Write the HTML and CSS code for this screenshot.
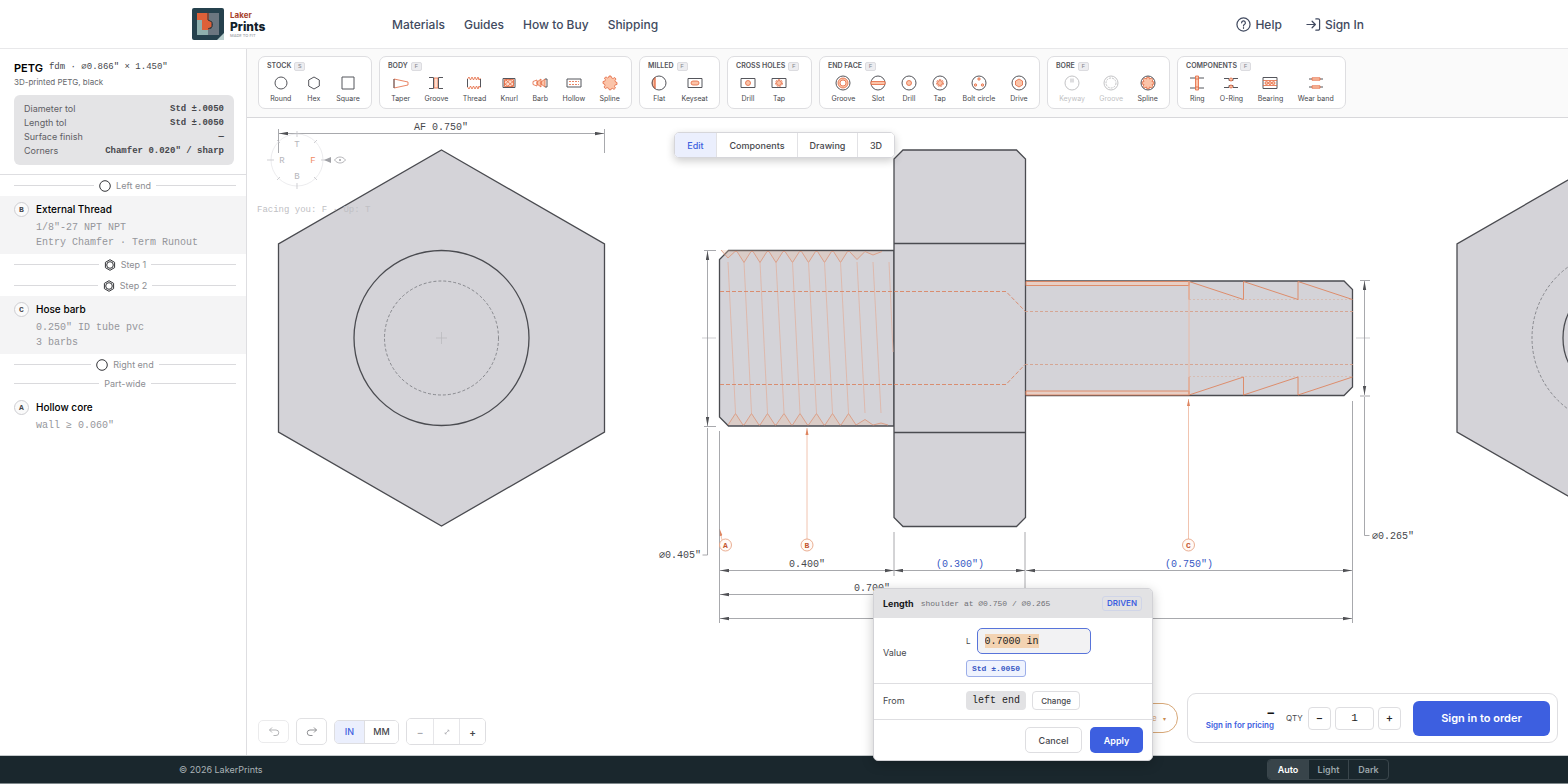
FILE: index.html
```html
<!DOCTYPE html>
<html lang="en">
<head>
<meta charset="utf-8">
<title>LakerPrints</title>
<link rel="stylesheet" href="styles.css">
</head>
<body>
<header class="site-header">
  <a class="brand" href="#">
    <svg class="brand-mark" viewBox="0 0 32 32" aria-hidden="true">
      <rect width="32" height="32" rx="2" fill="#25414d"/>
      <path d="M5 12h5v9h6v6H5z" fill="#8fb0ae"/>
      <path d="M17 5h10v22H16v-6h3l2-5-4-3z" fill="#6b7680"/>
      <path d="M5 5h12v7l3 2v5l-4 3h-6V12H5z" fill="#dd6038"/>
      <path d="M16 5v7l4 2v5l-4 2" fill="none" stroke="#2a343c"/>
      <path d="M32 25v7h-7z" fill="#b9cfce"/>
    </svg>
    <span class="brand-text">
      <span class="brand-top">Laker</span>
      <span class="brand-main">Prints</span>
      <span class="brand-tag">MADE TO FIT</span>
    </span>
  </a>
  <nav class="site-nav">
    <a href="#">Materials</a><a href="#">Guides</a><a href="#">How to Buy</a><a href="#">Shipping</a>
  </nav>
  <div class="account">
    <a href="#"><svg class="ic15" viewBox="0 0 16 16"><circle cx="8" cy="8" r="7"/><path d="M6 6.2a2 2 0 1 1 2.9 1.8C8.200 8.400 8 8.800 8 9.500M8 11.300v.8"/></svg>Help</a>
    <a href="#"><svg class="ic15" viewBox="0 0 16 16"><path d="M1 8h9M6.500 4.500 10 8l-3.500 3.500M10.500 2H13a1.500 1.500 0 0 1 1.500 1.500v9A1.500 1.500 0 0 1 13 14h-2.500"/></svg>Sign In</a>
  </div>
</header>

<main class="workspace">
  <aside class="sidebar">
    <section class="summary">
      <h1><b>PETG</b> <span>fdm · ⌀0.866" × 1.450"</span></h1>
      <p>3D-printed PETG, black</p>
      <dl class="specs">
        <div><dt>Diameter tol</dt><dd>Std ±.0050</dd></div>
        <div><dt>Length tol</dt><dd>Std ±.0050</dd></div>
        <div><dt>Surface finish</dt><dd>—</dd></div>
        <div><dt>Corners</dt><dd>Chamfer 0.020" / sharp</dd></div>
      </dl>
    </section>
    <div class="rule"><svg viewBox="0 0 12 12"><circle cx="6" cy="6" r="5.300"/></svg>Left end</div>
    <section class="feature tinted">
      <span class="mark">B</span>
      <div><h2>External Thread</h2><p>1/8"-27 NPT NPT</p><p>Entry Chamfer · Term Runout</p></div>
    </section>
    <div class="rule"><svg viewBox="0 0 12 12"><path d="M6 .7l4.600 2.650v5.300L6 11.300 1.400 8.650v-5.300z"/><circle cx="6" cy="6" r="3.300"/></svg>Step 1</div>
    <div class="rule"><svg viewBox="0 0 12 12"><path d="M6 .7l4.600 2.650v5.300L6 11.300 1.400 8.650v-5.300z"/><circle cx="6" cy="6" r="3.300"/></svg>Step 2</div>
    <section class="feature tinted">
      <span class="mark">C</span>
      <div><h2>Hose barb</h2><p>0.250" ID tube pvc</p><p>3 barbs</p></div>
    </section>
    <div class="rule"><svg viewBox="0 0 12 12"><circle cx="6" cy="6" r="5.300"/></svg>Right end</div>
    <div class="rule short">Part-wide</div>
    <section class="feature">
      <span class="mark">A</span>
      <div><h2>Hollow core</h2><p>wall ≥ 0.060"</p></div>
    </section>
  </aside>

  <div class="stage">
    <div class="toolbar">
      <section class="group stock"><h3>STOCK <kbd>S</kbd></h3><div class="tools">
        <button><svg viewBox="0 0 16 16"><circle class="k" cx="8" cy="8" r="6"/></svg>Round</button>
        <button><svg viewBox="0 0 16 16"><path class="k" d="M8 2l5.300 3v6L8 14l-5.300-3V5z"/></svg>Hex</button>
        <button><svg viewBox="0 0 16 16"><path class="k" d="M2 2h12v12H2z"/></svg>Square</button>
      </div></section>
      <section class="group body"><h3>BODY <kbd>F</kbd></h3><div class="tools">
        <button><svg viewBox="0 0 16 16"><path class="o" d="M1 4l14 3v3L1 13z"/><path class="k" d="M1 4v9"/></svg>Taper</button>
        <button><svg viewBox="0 0 16 16"><path class="oe" d="M6 3h4v10H6z"/><path class="k" d="M1 2.500h4.500v11H1M15 2.500h-4.500v11H15"/></svg>Groove</button>
        <button><svg viewBox="0 0 16 16"><path class="o" d="M1.500 4 3 2l1.500 3L6 2l1.500 3L9 2l1.500 3L12 2l1 3 1.500-2M1.500 12 3 14l1.500-3L6 14l1.500-3L9 14l1.500-3L12 14l1-3 1.500 2"/><path class="k" d="M1.500 4v8M14.500 4v8"/></svg>Thread</button>
        <button><svg viewBox="0 0 16 16"><path class="oe" d="M3.500 4.500h9v7h-9z"/><path class="o" d="M3 7l3-2.500M3 10.500 9.500 4M6.500 11.500 13 5.500M10 12l3-2.500M3 8l4 3.500M5 5l7 6.500M9 4.500l4 4"/><path class="k" d="M2 3.500h12v9H2z"/></svg>Knurl</button>
        <button><svg viewBox="0 0 16 16"><path class="of" d="M5 7 9 4v8L5 9zM9 7l4-3v8L9 9z"/><path class="o" d="M1 6.500 5 5v6L1 9.500z"/><path class="k" d="M13 4h2M13 12h2M15 4v8"/></svg>Barb</button>
        <button><svg viewBox="0 0 16 16"><path class="k" d="M1 4h14v8H1z"/><path class="o" stroke-dasharray="2 1" d="M3 6.500h10M3 9.500h10"/></svg>Hollow</button>
        <button><svg viewBox="0 0 16 16"><path class="of" d="M7 1h2l.5 1.800 1.600.7L12.700 2.500 14 4l-1 1.500.5 1.500L15 7.500v2l-1.800.3-.7 1.600 1 1.600-1.500 1.400-1.500-1-1.500.6L8.500 15h-1l-1-1.800-1.500-.6-1.600 1L2 12l1-1.500L2.500 9 1 8.500v-2l1.800-.3.6-1.500-1-1.600L4 1.900l1.500 1 1.200-.5z"/></svg>Spline</button>
      </div></section>
      <section class="group milled"><h3>MILLED <kbd>F</kbd></h3><div class="tools">
        <button><svg viewBox="0 0 16 16"><path class="of" d="M4 2.500A7 7 0 0 0 4 13.500z"/><circle class="k" cx="8" cy="8" r="7"/><path class="o" d="M4 2.500v11"/></svg>Flat</button>
        <button><svg viewBox="0 0 16 16"><path class="k" d="M1 3.500h14v9H1z"/><rect class="of" x="4" y="6" width="8" height="4" rx="2"/></svg>Keyseat</button>
      </div></section>
      <section class="group cross"><h3>CROSS HOLES <kbd>F</kbd></h3><div class="tools">
        <button><svg viewBox="0 0 16 16"><path class="k" d="M1 3.500h14v9H1z"/><circle class="of" cx="8" cy="8" r="2.500"/></svg>Drill</button>
        <button><svg viewBox="0 0 16 16"><path class="k" d="M1 3.500h14v9H1z"/><circle class="of" cx="8" cy="8" r="2.500"/><circle class="o" stroke-dasharray="2 1" cx="8" cy="8" r="3.500"/></svg>Tap</button>
      </div></section>
      <section class="group end"><h3>END FACE <kbd>F</kbd></h3><div class="tools">
        <button><svg viewBox="0 0 16 16"><circle class="k" cx="8" cy="8" r="7"/><circle class="of" cx="8" cy="8" r="5"/><circle class="ow" cx="8" cy="8" r="3"/></svg>Groove</button>
        <button><svg viewBox="0 0 16 16"><circle class="k" cx="8" cy="8" r="7"/><path class="of" d="M1 6.500h14v3H1z"/></svg>Slot</button>
        <button><svg viewBox="0 0 16 16"><circle class="k" cx="8" cy="8" r="7"/><circle class="of" cx="8" cy="8" r="2.500"/></svg>Drill</button>
        <button><svg viewBox="0 0 16 16"><circle class="k" cx="8" cy="8" r="7"/><circle class="of" cx="8" cy="8" r="2.500"/><circle class="o" stroke-dasharray="2 1" cx="8" cy="8" r="3.500"/></svg>Tap</button>
        <button><svg viewBox="0 0 16 16"><circle class="k" cx="8" cy="8" r="7"/><circle class="of" cx="8" cy="4" r="1.200"/><circle class="of" cx="4.500" cy="10" r="1.200"/><circle class="of" cx="11.500" cy="10" r="1.200"/></svg>Bolt circle</button>
        <button><svg viewBox="0 0 16 16"><circle class="k" cx="8" cy="8" r="7"/><path class="of" d="M8 4l3.500 2v4L8 12l-3.500-2V6z"/></svg>Drive</button>
      </div></section>
      <section class="group bore"><h3>BORE <kbd>F</kbd></h3><div class="tools">
        <button disabled><svg viewBox="0 0 16 16"><circle class="k" cx="8" cy="8" r="7"/><rect class="kf" x="6" y="3.500" width="4" height="4"/></svg>Keyway</button>
        <button disabled><svg viewBox="0 0 16 16"><circle class="k" cx="8" cy="8" r="7"/><circle class="k" stroke-dasharray="2 1" cx="8" cy="8" r="5"/></svg>Groove</button>
        <button><svg viewBox="0 0 16 16"><path class="of" d="M7 2h2l.5 2 2-1 1.500 1.500-1 2 2 .5v2l-2 .5 1 2-1.500 1.500-2-1L9 14H7l-.5-2-2 1L3 11.500l1-2L2 9V7l2-.5-1-2L4.500 3l2 1z"/><circle class="k" cx="8" cy="8" r="7"/></svg>Spline</button>
      </div></section>
      <section class="group comps"><h3>COMPONENTS <kbd>F</kbd></h3><div class="tools">
        <button><svg viewBox="0 0 16 16"><path class="k" d="M1 3h14M1 13h14"/><path class="of" d="M6.500 1h3v14h-3zM6.500 4h3M6.500 12h3"/></svg>Ring</button>
        <button><svg viewBox="0 0 16 16"><path class="k" d="M1 3.500h5v2h4v-2h5M1 12.500h5v-2h4v2h5"/><circle class="of" cx="8" cy="4.500" r="1.500"/><circle class="of" cx="8" cy="11.500" r="1.500"/></svg>O-Ring</button>
        <button><svg viewBox="0 0 16 16"><path class="k" d="M1 2.500h14v11H1z"/><path class="o" d="M1 5.500h14M1 10.500h14"/><circle class="of" cx="4.500" cy="8" r="1.500"/><circle class="of" cx="8" cy="8" r="1.500"/><circle class="of" cx="11.500" cy="8" r="1.500"/></svg>Bearing</button>
        <button><svg viewBox="0 0 16 16"><path class="k" d="M1 4h14M1 12h14"/><path class="of" d="M4 2.800h8v2.400H4zM4 10.800h8v2.400H4z"/></svg>Wear band</button>
      </div></section>
    </div>

    <div class="canvas">
      <svg class="drawing" viewBox="247 118 1321 637" preserveAspectRatio="xMinYMin meet">
        <defs>
          <marker id="arrow" viewBox="0 0 9 4" refX="9" refY="2" markerWidth="9" markerHeight="4" markerUnits="userSpaceOnUse" orient="auto-start-reverse"><path d="M0 .3l9 1.700-9 1.700z" fill="#505155"/></marker>
          <marker id="arrow-o" viewBox="0 0 7 4" refX="7" refY="2" markerWidth="7" markerHeight="4" markerUnits="userSpaceOnUse" orient="auto-start-reverse"><path d="M0 .5l7 1.500-7 1.500z" fill="#de8560"/></marker>
        </defs>
        <g class="solid">
          <path d="M441.500 150 604.500 244V432L441.500 526 278.500 432V244z"/>
          <circle cx="441.500" cy="338" r="87.500"/>
          <path d="M1620 150 1783 244V432L1620 526 1457 432V244z"/>
          <circle cx="1620" cy="338" r="57"/>
          <path d="M728.500 250.500H894V426H728.500L719.500 417V259.500z"/>
          <path d="M1025 281H1344L1352.500 289.500V387L1344 395.500H1025z"/>
          <path d="M903 150H1016.500L1025.500 159V517.500L1016.500 526.500H903L894 517.500V159z"/>
          <path d="M894 243.500h131M894 432.500h131"/>
        </g>
        <g class="hidden-edge"><circle cx="441.500" cy="338" r="57"/><circle cx="1620" cy="338" r="88"/></g>
        <path class="center" d="M436 338h11M441.500 332v12M702 338h14M1356 338h14"/>

        <g class="thread">
          <path class="cut" d="M721 250 728 258 735 251.500H737L744 262.500 751 251.500H753L760 262.500 767 251.500H769L776 262.500 783 251.500H785L792.500 262.500 799.500 251.500H801.500L808.500 262.500 815.500 251.500H817.500L824.500 262.500 831.500 251.500H833.500L840.500 262.500 847.500 251.500H849.500L857 259.500 865 251.500 873 255 882 251.500"/>
          <path class="cut" d="M728 425 735.500 413.500 743 425H744L751.500 413.500 759 425H760L767.500 413.500 775 425H776L784 413.500 791.500 425H792.500L800 413.500 807.500 425H808.500L816.500 413.500 824 425H825L832.500 413.500 840 425H841L848.500 413.500 856 425L865 419.500 873 425 881 423 888 425"/>
          <path class="helix" d="M728 262l7.500 151M744 262l7.500 151M760 262l7.500 151M776 262l8 151M792.500 262l7.500 151M808.500 262l8 151M824.500 262l8 151M840.500 262l8 151M857 262l8 151M873 262l8 151M889 262l4 90"/>
        </g>
        <path class="bore-line" d="M720 291.500h286l19 19.500M720 384.500h286l19-20"/>
        <path class="bore-line thin" d="M1025 311.500h328M1025 364.500h328"/>
        <path class="bore-line faint" d="M1189 299.500h164M1189 376.500h164"/>
        <g class="barb">
          <path class="band" d="M1026 281.500h163v4h-163zM1026 391h163v4h-163z"/>
          <path d="M1189 299.500v-18l54.500 18v-18l54.500 18v-18l54.500 18M1189 377v18l54.500-18v18l54.500-18v18l54.500-18"/>
        </g>
        <g class="leader">
          <path d="M1189 281v114"/>
          <path d="M807 539V428" marker-end="url(#arrow-o)"/>
          <path d="M1188.500 539V399" marker-end="url(#arrow-o)"/>
          <path d="M722 540l-2.500-11" marker-end="url(#arrow-o)"/>
        </g>

        <path class="ext" d="M278.500 129v24M604.500 129v24M704 250.500h12M704 426.500h12M707.500 428v127h-5M1360 280.500h10M1360 396h10M1364.500 397v138.500h5M719.500 431v192M894 532v44M1025 532v67M1352.500 401v222"/>
        <g class="dims">
          <path d="M279 133.500h325"/><path d="M707.500 251v175"/><path d="M1364.500 281v114"/><path d="M720 570.500h174"/><path d="M894 570.500h131"/><path d="M1026 570.500h326"/><path d="M720 594.500h305"/><path d="M720 618.500h632"/>
        </g>
        <g class="dim-text">
          <text x="441" y="130">AF 0.750"</text>
          <text x="680" y="558">⌀0.405"</text>
          <text x="1393" y="539">⌀0.265"</text>
          <text x="807" y="567">0.400"</text>
          <text x="872" y="591">0.700"</text>
          <text class="blue" x="960" y="567">(0.300")</text>
          <text class="blue" x="1189" y="567">(0.750")</text>
        </g>
        <g class="balloon">
          <circle cx="725.500" cy="545" r="6"/><circle cx="807" cy="545" r="6"/><circle cx="1188.500" cy="545" r="6"/>
          <text x="725.500" y="548">A</text><text x="807" y="548">B</text><text x="1188.500" y="548">C</text>
        </g>

        <g class="compass">
          <circle cx="297" cy="160" r="26"/>
          <path d="M297 131v6M297 183v6M267 160h7M321 160h9M277 140l3 3M317 140l-3 3M277 180l3-3M317 180l-3-3"/>
          <path class="eye" d="M334.500 160c3-4 8-4 11 0-3 4-8 4-11 0z"/><circle class="dot" cx="340" cy="160" r="1"/>
          <path class="dot" d="M324 160l7-3v6z"/>
          <text x="297" y="147">T</text><text x="282" y="163">R</text><text class="front" x="313" y="163">F</text><text x="297" y="179">B</text>
          <text class="facing" x="257" y="212">Facing you: F · Up: T</text>
        </g>
      </svg>

      <div class="view-tabs"><button class="on">Edit</button><button>Components</button><button>Drawing</button><button>3D</button></div>

      <div class="controls">
        <button class="ctl faded" aria-label="Undo"><svg viewBox="0 0 12 12"><path d="M4 1.500 1.500 4 4 6.500M1.500 4H8a2.700 2.700 0 0 1 0 5.500H5.500"/></svg></button>
        <button class="ctl tall" aria-label="Redo"><svg viewBox="0 0 12 12"><path d="M8 1.500 10.500 4 8 6.500M10.500 4H4a2.700 2.700 0 0 0 0 5.500h2.500"/></svg></button>
        <div class="units"><button class="on">IN</button><button>MM</button></div>
        <div class="zoomer"><button class="dim">−</button><button class="dim" aria-label="Fit"><svg viewBox="0 0 8 8"><path d="M1.500 6.500l5-5M4.500 1.500h2v2M1.500 4.500v2h2"/></svg></button><button>+</button></div>
      </div>

      <div class="order-area">
        <button class="notice">Notice <span>▾</span></button>
        <div class="order">
          <div class="price"><strong>–</strong><a href="#">Sign in for pricing</a></div>
          <label for="qty">QTY</label>
          <div class="stepper"><button>−</button><input id="qty" value="1"><button>+</button></div>
          <button class="primary">Sign in to order</button>
        </div>
      </div>

      <form class="popover">
        <div class="pop-head"><strong>Length</strong><span>shoulder at ⌀0.750 / ⌀0.265</span><em>DRIVEN</em></div>
        <div class="pop-row value">
          <label for="len">Value</label>
          <div class="fields">
            <div class="field"><span>L</span><input id="len" value="0.7000 in"></div>
            <button type="button" class="tol">Std ±.0050</button>
          </div>
        </div>
        <div class="pop-row from">
          <span>From</span>
          <div class="from-set"><output>left end</output><button type="button">Change</button></div>
        </div>
        <div class="pop-foot"><button type="button">Cancel</button><button type="button" class="apply">Apply</button></div>
      </form>
    </div>
  </div>
</main>

<footer class="site-footer">
  <span>© 2026 LakerPrints</span>
  <div class="theme"><button class="on">Auto</button><button>Light</button><button>Dark</button></div>
</footer>
</body>
</html>
```
FILE: styles.css
```css
* { box-sizing: border-box; margin: 0; padding: 0; }
:root {
  --mono: "Liberation Mono", monospace;
  --blue: #3d5fe0;
  --line: #dedee1;
  --ink: #17181b;
}
body {
  min-height: 100vh;
  display: flex;
  flex-direction: column;
  font-family: Inter, sans-serif;
  font-size: 9px;
  color: #46474c;
  background: #fff;
  overflow-x: hidden;
}
button, input { font: inherit; color: inherit; background: #fff; border: 1px solid var(--line); }
a { color: inherit; text-decoration: none; }
svg { display: block; flex: none; }

/* Header */
.site-header { display: flex; align-items: center; height: 49px; padding: 0 204px 0 192px; border-bottom: 1px solid #e8e8ea; font-size: 12px; font-weight: 500; color: #414a60; }
.brand { display: flex; align-items: center; gap: 6px; width: 200px; }
.brand-mark { width: 32px; height: 32px; }
.brand-text { display: flex; flex-direction: column; }
.brand-top { font-size: 8px; line-height: 10px; font-weight: 700; color: #a8422c; }
.brand-main { font-size: 12px; line-height: 13px; font-weight: 800; color: #12212a; }
.brand-tag { font-size: 4px; line-height: 5px; color: #a2a5aa; }
.site-nav { display: flex; gap: 19px; }
.account { display: flex; gap: 24px; margin-left: auto; }
.account a { display: flex; align-items: center; gap: 4px; }
.ic15 { width: 15px; height: 15px; fill: none; stroke: currentColor; stroke-width: 1.3; stroke-linecap: round; stroke-linejoin: round; }

/* Sidebar */
.workspace { flex: 1; display: flex; }
.sidebar { flex: 0 0 247px; border-right: 1px solid var(--line); }
.summary { padding: 11px 12px 9px 14px; border-bottom: 1px solid var(--line); }
.summary h1 { display: flex; align-items: center; gap: 6px; height: 15px; font-size: 11px; font-weight: 400; white-space: nowrap; }
.summary b { font-weight: 600; color: #000; }
.summary h1 span { font: 9px/15px var(--mono); }
.summary p { font-size: 8px; line-height: 14px; color: #66676c; }
.specs { margin-top: 6px; padding: 7px 10px; background: #e4e4e6; border-radius: 6px; }
.specs div { display: flex; justify-content: space-between; line-height: 14px; }
.specs dt { color: #5f6065; }
.specs dd { font: 600 9px/14px var(--mono); }
.rule { display: flex; align-items: center; gap: 5px; height: 21px; padding: 0 10px 0 14px; color: #8c8d92; }
.rule.short { height: 17px; margin-bottom: 2px; }
.rule::before, .rule::after { content: ""; flex: 1; border-top: 1px solid #dadadd; }
.rule svg { width: 12px; height: 12px; fill: none; stroke: #333438; }
.feature { display: flex; gap: 7px; padding: 6px 14px 4px; }
.tinted { background: #f4f4f5; }
.mark { width: 15px; height: 15px; border: 1px solid #ceced2; border-radius: 50%; background: #fafafa; font: 700 8px/13px var(--mono); text-align: center; }
.feature h2 { font-size: 10px; line-height: 15px; font-weight: 500; color: #000; margin-bottom: 3px; }
.feature p { font: 10px/15px var(--mono); color: #95969b; white-space: nowrap; }

/* Toolbar */
.stage { flex: 1; min-width: 0; display: flex; flex-direction: column; }
.toolbar { display: flex; gap: 7px; height: 69px; padding: 7px 11px; background: #fafafa; border-bottom: 1px solid #d8d8db; }
.group { flex: none; height: 53px; border: 1px solid var(--line); border-radius: 7px; background: #fff; padding: 4px 4px 0; }
.group h3 { display: flex; align-items: center; gap: 3px; padding-left: 4px; font-size: 7px; line-height: 10px; font-weight: 600; color: #55565b; white-space: nowrap; }
.group kbd { width: 11px; height: 9px; border: 1px solid #dcdce0; border-radius: 2px; background: #ededf0; font: 6px/7px var(--mono); color: #85868c; text-align: center; }
.tools { display: flex; justify-content: space-around; padding-top: 4px; }
.tools button { display: flex; flex-direction: column; align-items: center; gap: 3px; border: 0; font-size: 7px; line-height: 10px; white-space: nowrap; }
.tools button:disabled { opacity: .35; }
.tools svg { width: 16px; height: 16px; fill: none; }
.stock { width: 114px; } .body { width: 253px; } .milled { width: 81px; } .cross { width: 85px; }
.end { width: 221px; } .bore { width: 123px; } .comps { width: 169px; }
.cross .tools { justify-content: flex-start; gap: 15px; padding-left: 8px; }
.k { stroke: #55565c; }
.kf { fill: #a0a1a5; }
.o { stroke: #e3673f; stroke-width: .8; }
.oe { fill: #fdddcd; stroke: #e3673f; stroke-width: .8; }
.of { fill: #fbc4a9; stroke: #e3673f; stroke-width: .8; }
.ow { fill: #fff; stroke: #e3673f; stroke-width: .8; }

/* Drawing */
.canvas { position: relative; flex: 1; }
.drawing { position: absolute; inset: 0; width: 100%; height: 100%; }
.drawing text { font-family: var(--mono); font-size: 10px; text-anchor: middle; }
.solid { fill: #d4d3d8; stroke: #4a4b50; stroke-width: 1.3; }
.hidden-edge { fill: none; stroke: #75767b; stroke-width: .8; stroke-dasharray: 3 2; }
.center { stroke: #b7b7bc; stroke-width: .7; fill: none; }
.thread { fill: none; stroke: #dc9478; stroke-width: .8; }
.cut { fill: #e8bda0; fill-opacity: .3; }
.helix { stroke: #dfb3a2; }
.bore-line { fill: none; stroke: #d98464; stroke-width: .9; stroke-dasharray: 4 2; }
.bore-line.thin { stroke: #d69a83; stroke-width: .8; stroke-dasharray: 3 2; }
.bore-line.faint { stroke: #d9b3a5; stroke-width: .7; stroke-dasharray: 2 2; }
.barb { fill: none; stroke: #de8560; stroke-width: .9; }
.band { fill: #e8cfc5; }
.leader { fill: none; stroke: #eeb59c; stroke-width: .8; }
.ext { fill: none; stroke: #929398; stroke-width: .8; }
.dims path { fill: none; stroke: #929398; stroke-width: .8; marker-start: url(#arrow); marker-end: url(#arrow); }
.dim-text { fill: #46474c; }
.blue { fill: #3858c4; }
.balloon { fill: #fffaf6; stroke: #e49a78; stroke-width: .8; }
.balloon text { fill: #c4552f; stroke: none; font-size: 8px; font-weight: 700; }
.compass { fill: none; stroke: #bcbcc1; stroke-width: .7; }
.compass circle { stroke: #e4e4e7; }
.compass .eye { stroke: #96979c; }
.compass .dot { fill: #a0a1a6; stroke: none; }
.compass text { fill: #b6b6bb; stroke: none; font-size: 9px; }
.compass .front { fill: #f08a66; }
.compass .facing { text-anchor: start; fill: #c0c0c4; }

/* Floating controls */
.view-tabs { position: absolute; left: 427px; top: 14px; display: grid; grid-template-columns: 42px 81px 60px 36px; height: 26px; border: 1px solid #d6d6da; border-radius: 5px; overflow: hidden; box-shadow: 0 3px 9px rgba(0, 0, 0, .2); }
.view-tabs button { border: 0; border-right: 1px solid #e2e2e5; font-size: 9px; font-weight: 500; }
.view-tabs button:last-child { border-right: 0; }
.view-tabs .on, .units .on { background: #ebeffd; color: var(--blue); }
.controls { position: absolute; left: 11px; bottom: 10px; display: flex; align-items: center; gap: 7px; }
.ctl { display: grid; place-items: center; width: 31px; height: 23px; border-radius: 5px; color: #75767b; }
.ctl.tall { height: 27px; opacity: .9; }
.ctl.faded { opacity: .6; }
.ctl svg { width: 12px; height: 12px; fill: none; stroke: currentColor; stroke-width: .9; }
.units, .zoomer { display: flex; border: 1px solid var(--line); border-radius: 5px; overflow: hidden; }
.units { height: 24px; }
.units button { border: 0; width: 29px; font-size: 9px; font-weight: 500; }
.units button + button { width: 34px; border-left: 1px solid var(--line); }
.zoomer { height: 27px; }
.zoomer button { display: grid; place-items: center; width: 26px; border: 0; font-size: 10px; font-weight: 600; }
.zoomer button + button { border-left: 1px solid #e6e6e9; }
.zoomer .dim { color: #aaaaaf; }
.zoomer svg { width: 6px; height: 6px; fill: none; stroke: currentColor; }

.order-area { position: absolute; right: 10px; bottom: 12px; display: flex; align-items: center; gap: 9px; }
.notice { height: 30px; width: 90px; padding-right: 11px; border-color: #d8a878; border-radius: 15px; color: #dba878; font-size: 8px; text-align: right; }
.notice span { margin-left: 4px; font-size: 6px; color: #c98a4c; }
.order { display: flex; align-items: center; height: 50px; width: 371px; padding: 0 7px 0 13px; border: 1px solid var(--line); border-radius: 9px; background: #fff; }
.price { display: flex; flex-direction: column; align-items: flex-end; width: 73px; margin-right: 12px; }
.price strong { font-size: 13px; line-height: 14px; color: #111; }
.price a { font-size: 8px; line-height: 12px; font-weight: 600; color: var(--blue); white-space: nowrap; }
.order label { width: 22px; font-size: 8px; }
.stepper { display: grid; grid-template-columns: 23px 39px 23px; gap: 4px; }
.stepper button, .stepper input { height: 23px; width: 100%; border-radius: 4px; text-align: center; font-size: 11px; font-weight: 500; color: #222; }
.stepper input { font-family: var(--mono); font-weight: 400; }
.primary { margin-left: auto; width: 137px; height: 35px; border: 0; border-radius: 6px; background: var(--blue); color: #fff; font-size: 11px; font-weight: 600; }

/* Dimension editor */
.popover { position: absolute; right: 415px; bottom: -6px; z-index: 2; width: 280px; border: 1px solid #d2d2d6; border-radius: 5px; background: #fff; overflow: hidden; box-shadow: 0 3px 12px rgba(0, 0, 0, .22); }
.pop-head { display: flex; align-items: center; gap: 7px; height: 29px; padding: 0 10px 0 9px; background: #e2e2e4; }
.pop-head strong { font-size: 9px; font-weight: 700; color: var(--ink); }
.pop-head span { font: 8px var(--mono); color: #707176; white-space: nowrap; }
.pop-head em { margin-left: auto; padding: 2px 4px; border: 1px solid #d0d5e8; border-radius: 3px; font-size: 8px; line-height: 9px; font-style: normal; font-weight: 600; color: var(--blue); }
.pop-row { display: grid; grid-template-columns: 83px 1fr; align-items: center; padding: 0 9px; border-bottom: 1px solid var(--line); }
.value { padding: 10px 9px 6px; }
.fields { display: flex; flex-direction: column; align-items: flex-start; gap: 6px; }
.field { display: flex; align-items: center; gap: 6px; font-size: 8px; }
.field input { width: 114px; height: 26px; padding: 0 7px; border-color: #5874da; border-radius: 5px; font: 10px var(--mono); color: #222; background: linear-gradient(#f3d3b2, #f3d3b2) 8px center / 54px 14px no-repeat border-box #f2f2f3; }
.tol { height: 17px; padding: 0 5px; border-color: #9caee9; border-radius: 3px; background: #eff3fe; color: #3858c4; font: 600 8px var(--mono); }
.from { height: 36px; padding-bottom: 2px; }
.from-set { display: flex; gap: 6px; }
.from-set output { height: 19px; padding: 0 6px; border-radius: 4px; background: #e2e2e4; font: 10px/19px var(--mono); color: #222; }
.from-set button { height: 19px; width: 48px; border-radius: 4px; font-size: 8px; font-weight: 500; }
.pop-foot { display: flex; justify-content: flex-end; gap: 8px; padding: 7px 9px; }
.pop-foot button { width: 57px; height: 26px; border-radius: 5px; font-weight: 500; }
.pop-foot .apply { width: 53px; border: 0; background: var(--blue); color: #fff; font-weight: 600; }

/* Footer */
.site-footer { display: flex; align-items: center; justify-content: space-between; height: 29px; padding: 0 179px; background: #1a272d; border-top: 1px solid #c5cacc; border-bottom: 1px solid #7f888b; color: #aab3b7; }
.theme { display: flex; height: 21px; border: 1px solid #3a464c; border-radius: 4px; overflow: hidden; }
.theme button { width: 40px; border: 0; background: none; font-weight: 600; color: #9aa5aa; }
.theme button + button { border-left: 1px solid #3a464c; }
.theme .on { background: #38444a; color: #fff; }
```
